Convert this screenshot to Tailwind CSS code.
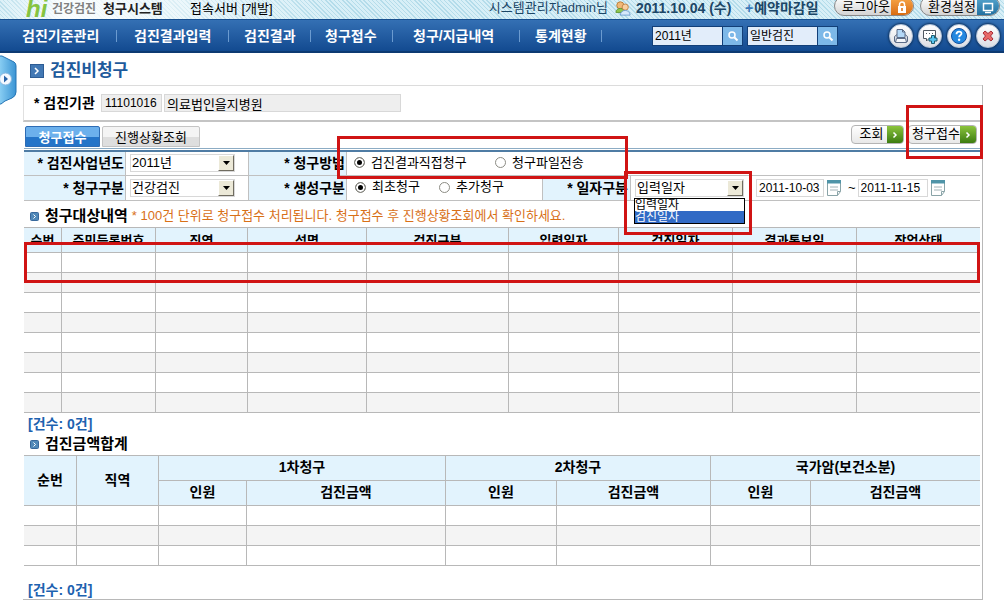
<!DOCTYPE html>
<html lang="ko">
<head>
<meta charset="utf-8">
<title>검진비청구</title>
<script src="https://cdn.jsdelivr.net/npm/@tailwindcss/browser@4"></script>
</head>
<body class="bg-white text-black text-[13px] leading-4 font-['Liberation_Sans','Noto_Sans_CJK_KR',sans-serif]">

<header class="flex h-[19px] items-end overflow-hidden whitespace-nowrap pr-1 bg-[repeating-linear-gradient(45deg,#b4dcea_0px,#b4dcea_1px,#d8eff7_1px,#d8eff7_3px)]">
  <div class="flex w-[330px] items-end self-stretch bg-linear-to-r from-white/10 via-white/90 via-20% to-white/0 pb-0.5 pl-[26px]">
    <span class="mr-1.5 w-5 text-[24px] leading-4 font-bold italic text-[#86c440]">hi</span>
    <span class="mr-[5px] w-[46px] text-[12px] font-bold text-[#808080]">건강검진</span>
    <span class="mr-6 w-[63px] text-[13px] font-bold text-[#222]">청구시스템</span>
    <span>접속서버 [개발]</span>
  </div>
  <div class="ml-auto flex items-end pb-[3px] text-[#1c4666]">
    <span class="mr-1.5">시스템관리자admin님</span>
    <svg class="mr-1 h-4 w-[18px]" viewBox="0 0 18 18"><circle cx="6" cy="6" r="4" fill="#f0b878" stroke="#b87830"/><path d="M1 14c0-6 10-6 10 0z" fill="#8fc850" stroke="#5c9430"/><circle cx="11.500" cy="8" r="3.500" fill="#f8cfa0" stroke="#c08040"/><path d="M6 17c0-7 11-7 11 0z" fill="#d6e8fa" stroke="#6b9cd0"/></svg>
    <span class="mr-3 w-[97px] text-[14px] font-bold">2011.10.04 (수)</span>
    <a href="#" class="mr-[13px] w-[76px] text-[14px] font-bold"><span class="mr-px text-[#3a78b8]">+</span>예약마감일</a>
    <button class="mr-1.5 flex h-5 w-20 overflow-hidden rounded-full border border-[#888] bg-linear-to-b from-white to-[#d4d4d4] text-black"><span class="flex-1 pl-1.5 pt-0.5">로그아웃</span><span class="flex h-full w-[22px] items-end justify-center bg-linear-to-b from-[#f8a848] to-[#d86c10]"><svg class="h-[14px] w-3" viewBox="0 0 12 14"><path d="M3.500 6V3.500a2.500 2.500 0 0 1 5 0V6" fill="none" stroke="#fff" stroke-width="1.500"/><rect x="2" y="5" width="8" height="7" fill="#fff"/><path d="M6 7v3" stroke="#d86c10" stroke-width="1.500"/></svg></span></button>
    <button class="flex h-5 w-20 overflow-hidden rounded-full border border-[#888] bg-linear-to-b from-white to-[#d4d4d4] text-black"><span class="flex-1 pl-1.5 pt-0.5">환경설정</span><span class="flex h-full w-[22px] items-end justify-center bg-linear-to-b from-[#58a8d0] to-[#2070a0]"><svg class="h-[14px] w-3" viewBox="0 0 12 14"><rect x="1.500" y="2.500" width="9" height="7" fill="none" stroke="#fff" stroke-width="1.500"/><path d="M3 11.500h6" stroke="#fff" stroke-width="1.500"/></svg></span></button>
  </div>
</header>

<nav class="flex h-[34px] items-center border-b-2 border-t border-b-[#0d3a72] border-t-[#174f8f] bg-linear-to-b from-[#3470b4] to-[#124a90] pl-[22px] pr-1 text-[14px] font-bold text-white whitespace-nowrap">
  <a href="#" class="w-[94px]">검진기준관리</a><i class="mr-[17px] h-3 w-px bg-[#6b9bd0]"></i>
  <a href="#" class="w-[94px]">검진결과입력</a><i class="mr-[15px] h-3 w-px bg-[#6b9bd0]"></i>
  <a href="#" class="w-[66px]">검진결과</a><i class="mr-[14px] h-3 w-px bg-[#6b9bd0]"></i>
  <a href="#" class="w-[67px]">청구접수</a><i class="mr-5 h-3 w-px bg-[#6b9bd0]"></i>
  <a href="#" class="w-[106px]">청구/지급내역</a><i class="mr-[15px] h-3 w-px bg-[#6b9bd0]"></i>
  <a href="#" class="w-[66px]">통계현황</a><i class="h-3 w-px bg-[#6b9bd0]"></i>
  <div class="ml-auto flex items-center">
    <div class="mr-1 flex h-5 w-[91px] border border-[#123f78] bg-[#e2edfa]">
      <input aria-label="년도" value="2011년" class="w-0 flex-1 px-0.5 text-[12px] font-normal leading-4 text-black">
      <button aria-label="년도 검색" class="flex w-5 items-center justify-center border-l border-[#123f78] bg-[#7db8e8]"><svg class="h-3 w-3" viewBox="0 0 12 12" fill="none" stroke="#fff"><circle cx="5" cy="5" r="3" stroke-width="1.500"/><path d="M7.500 7.500l3 3" stroke-width="2"/></svg></button>
    </div>
    <div class="mr-[51px] flex h-5 w-[91px] border border-[#123f78] bg-[#e2edfa]">
      <input aria-label="검진종류" value="일반검진" class="w-0 flex-1 px-0.5 text-[12px] font-normal leading-4 text-black">
      <button aria-label="검진종류 검색" class="flex w-5 items-center justify-center border-l border-[#123f78] bg-[#7db8e8]"><svg class="h-3 w-3" viewBox="0 0 12 12" fill="none" stroke="#fff"><circle cx="5" cy="5" r="3" stroke-width="1.500"/><path d="M7.500 7.500l3 3" stroke-width="2"/></svg></button>
    </div>
    <div class="flex gap-[5px]">
      <button aria-label="인쇄" class="flex h-6 w-6 items-center justify-center rounded-full border border-[#b8c4d4] bg-linear-to-b from-white to-[#dcdee4] shadow-[0_0_2px_1px_#123764]"><svg class="h-[18px] w-[18px]" viewBox="0 0 18 18" stroke="#5c6c88"><path d="M2.500 9.500l2.500-2h8l2.500 2v5h-13z" fill="#d8dce4"/><path d="M5 10.500v-8h5.500L13 5v5.500z" fill="#b4d8f8"/><path d="M10.500 2.500V5H13" fill="none"/><path d="M4.500 11.500h9l1 4h-11z" fill="#f4f6fa"/></svg></button>
      <button aria-label="메시지 추가" class="flex h-6 w-6 items-center justify-center rounded-full border border-[#b8c4d4] bg-linear-to-b from-white to-[#dcdee4] shadow-[0_0_2px_1px_#123764]"><svg class="h-[18px] w-[18px]" viewBox="0 0 18 18" fill="#fff" stroke="#505860"><path d="M2.500 3.500h12v8H8L5.500 14v-2.500h-3z"/><path d="M5 6.500h1M8 6.500h1M11 6.500h1"/><path d="M10.500 8.500h3v2.500h2.500v3h-2.500v2.500h-3V14H8v-3h2.500z" fill="#58c4f0" stroke="#1c5c70"/></svg></button>
      <button aria-label="도움말" class="flex h-6 w-6 items-center justify-center rounded-full border border-[#b8c4d4] bg-linear-to-b from-white to-[#dcdee4] shadow-[0_0_2px_1px_#123764]"><svg class="h-[18px] w-[18px]" viewBox="0 0 18 18"><circle cx="9" cy="9" r="7.500" fill="#2488e0" stroke="#1050a0"/><path d="M6.500 7.200c0-3.500 5-3.300 5-.6 0 1.700-2.400 1.700-2.400 3.600" fill="none" stroke="#fff" stroke-width="1.800"/><circle cx="9.100" cy="12.800" r="1.200" fill="#fff"/></svg></button>
      <button aria-label="닫기" class="flex h-6 w-6 items-center justify-center rounded-full border border-[#b8c4d4] bg-linear-to-b from-white to-[#dcdee4] shadow-[0_0_2px_1px_#123764]"><svg class="h-[14px] w-[14px]" viewBox="0 0 14 14"><path d="M2 4l2-2 3 2.500L10 2l2 2-2.500 3L12 10l-2 2-3-2.500L4 12l-2-2 2.500-3z" fill="#e86868" stroke="#a82c38"/></svg></button>
    </div>
  </div>
</nav>

<main class="relative ml-[23px] mr-[21px] whitespace-nowrap">
  <button aria-label="메뉴 열기" class="absolute -left-[23px] top-[2px]"><svg class="h-[50px] w-[17px]" viewBox="0 0 17 50"><defs><linearGradient id="tabfill"><stop offset="0" stop-color="#8cd0f4"/><stop offset="1" stop-color="#3a94d4"/></linearGradient></defs><path d="M-1 1h3l4 2 8 4q2 1 2 4v26q0 4-4 6l-7 3-4 3h-2z" fill="url(#tabfill)" stroke="#2474b4"/><circle cx="5.500" cy="24" r="6" fill="#f4f9ff" stroke="#88b8e0"/><path d="M4 20.500v7l4-3.500z" fill="#2a64a8"/></svg></button>

  <h1 class="flex h-8 items-center gap-1.5 pl-[7px] pt-1 text-[17px] leading-5 font-bold text-[#1d5a9c]">
    <svg class="h-[14px] w-[14px]" viewBox="0 0 14 14"><rect x=".5" y=".5" width="13" height="13" fill="#4278b4" stroke="#2d5c94"/><path d="M5 4l3 3-3 3" fill="none" stroke="#fff" stroke-width="1.500"/></svg>검진비청구
  </h1>

  <div class="border-r border-b border-[#b8b8b8]">
    <div class="flex h-[37px] items-center border-b-2 border-l border-t border-b-[#c4c4c4] border-l-[#e0e0e0] border-t-[#dcdcdc] pl-[10px]">
      <label for="org" class="w-[67px] text-[14px] font-bold">* 검진기관</label>
      <input id="org" readonly value="11101016" class="mr-0.5 h-[18px] w-[61px] border border-[#d8d8d8] bg-[#eee] px-[3px] text-[12px]">
      <input aria-label="기관명" readonly value="의료법인을지병원" class="h-[18px] w-[237px] border border-[#d8d8d8] bg-[#eee] px-0.5 text-[13px]">
    </div>

    <div class="pl-px pr-0.5">
      <div class="flex h-[26px] items-end gap-0.5 pl-px">
        <button class="mb-px h-[21px] w-[75px] rounded-t-xs border border-[#2e6cb4] bg-linear-to-b from-[#6cb0ec] from-50% to-[#2474c8] to-50% pt-0.5 text-[13px] font-bold text-white">청구접수</button>
        <button class="mb-px h-[21px] w-[98px] rounded-t-xs border border-[#c4c4c4] bg-linear-to-b from-[#f4f4f4] from-50% to-[#dedede] to-50% pt-0.5 text-[13px]">진행상황조회</button>
        <div class="ml-auto flex gap-1 pb-1 pr-[3px]">
          <button class="flex h-[19px] w-[53px] items-stretch overflow-hidden rounded-sm border border-[#b4b4b4] bg-linear-to-b from-white to-[#e8e8e8]"><span class="flex-1 pl-1">조회</span><span class="flex w-4 items-center justify-center bg-linear-to-b from-[#8cc43c] to-[#3c7c10]"><svg class="h-2 w-2" viewBox="0 0 8 8"><path d="M2.500 1.500L5 4 2.500 6.500" fill="none" stroke="#fff" stroke-width="1.500"/></svg></span></button>
          <div class="relative">
            <button class="flex h-[19px] w-[69px] items-stretch overflow-hidden rounded-sm border border-[#b4b4b4] bg-linear-to-b from-white to-[#e8e8e8]"><span class="flex-1 pl-[3px] text-left">청구접수</span><span class="flex w-4 items-center justify-center bg-linear-to-b from-[#8cc43c] to-[#3c7c10]"><svg class="h-2 w-2" viewBox="0 0 8 8"><path d="M2.500 1.500L5 4 2.500 6.500" fill="none" stroke="#fff" stroke-width="1.500"/></svg></span></button>
            <div class="pointer-events-none absolute -left-0.5 -right-1.5 -top-5 h-[54px] border-3 border-[#d01414]"></div>
          </div>
        </div>
      </div>
      <div class="h-1 border-b-2 border-t border-b-[#4f7ca4] border-t-[#8cacc4]"></div>

      <form>
        <div class="flex h-6 border-b border-[#c0c0c0]">
          <label for="year" class="flex w-[102px] items-center justify-end border-r border-[#c0c0c0] bg-[#e2f3fd] pb-0.5 pr-px text-[14px] font-bold">* 검진사업년도</label>
          <div class="flex w-[123px] items-center border-r border-[#c0c0c0] pb-0.5 pl-1">
            <div class="relative h-[18px] w-[105px] border border-[#d8d8d8]">
              <select id="year" class="h-4 w-full appearance-none pl-px text-[13px] leading-4"><option>2011년</option></select>
              <span class="pointer-events-none absolute right-0 top-0 flex h-4 w-4 items-center justify-center border border-b-[#706c60] border-l-white border-r-[#706c60] border-t-white bg-[#ece9d8]"><svg class="h-1 w-[7px]" viewBox="0 0 7 4"><path d="M0 0h7L3.500 4z"/></svg></span>
            </div>
          </div>
          <span class="flex w-[98px] items-center justify-end border-r border-[#c0c0c0] bg-[#e2f3fd] pb-0.5 pr-px text-[14px] font-bold">* 청구방법</span>
          <div class="relative flex items-center pb-0.5 pl-[7px]">
            <input type="radio" name="method" id="m1" checked class="mr-1.5 h-[11px] w-[11px] appearance-none rounded-full border border-[#8c8c84] bg-white shadow-[inset_0_0_0_2px_#fff] checked:bg-black"><label for="m1" class="w-[124px]">검진결과직접청구</label>
            <input type="radio" name="method" id="m2" class="mr-1.5 h-[11px] w-[11px] appearance-none rounded-full border border-[#8c8c84] bg-white shadow-[inset_0_0_0_2px_#fff] checked:bg-black"><label for="m2" class="w-[116px]">청구파일전송</label>
            <div class="pointer-events-none absolute -left-[10px] right-0 -top-4 z-10 h-[43px] border-3 border-[#d01414]"></div>
          </div>
        </div>
        <div class="flex h-[25px] border-b border-[#c0c0c0]">
          <label for="kind" class="flex w-[102px] items-center justify-end border-r border-[#c0c0c0] bg-[#e2f3fd] pr-px text-[14px] font-bold">* 청구구분</label>
          <div class="flex w-[123px] items-center border-r border-[#c0c0c0] pl-1">
            <div class="relative h-[18px] w-[105px] border border-[#d8d8d8]">
              <select id="kind" class="h-4 w-full appearance-none pl-px text-[13px] leading-4"><option>건강검진</option></select>
              <span class="pointer-events-none absolute right-0 top-0 flex h-4 w-4 items-center justify-center border border-b-[#706c60] border-l-white border-r-[#706c60] border-t-white bg-[#ece9d8]"><svg class="h-1 w-[7px]" viewBox="0 0 7 4"><path d="M0 0h7L3.500 4z"/></svg></span>
            </div>
          </div>
          <span class="flex w-[98px] items-center justify-end border-r border-[#c0c0c0] bg-[#e2f3fd] pr-px text-[14px] font-bold">* 생성구분</span>
          <div class="flex w-[196px] items-center border-r border-[#c0c0c0] pb-0.5 pl-2">
            <input type="radio" name="create" id="c1" checked class="mr-1.5 h-[11px] w-[11px] appearance-none rounded-full border border-[#8c8c84] bg-white shadow-[inset_0_0_0_2px_#fff] checked:bg-black"><label for="c1" class="w-[67px]">최초청구</label>
            <input type="radio" name="create" id="c2" class="mr-1.5 h-[11px] w-[11px] appearance-none rounded-full border border-[#8c8c84] bg-white shadow-[inset_0_0_0_2px_#fff] checked:bg-black"><label for="c2">추가청구</label>
          </div>
          <label for="datekind" class="flex w-[88px] items-center justify-end border-r border-[#c0c0c0] bg-[#e2f3fd] pr-0.5 text-[14px] font-bold">* 일자구분</label>
          <div class="flex items-center pl-1">
            <div class="relative mr-3 h-[18px] w-[109px] border border-[#d8d8d8]">
              <select id="datekind" class="h-4 w-full appearance-none pl-px text-[13px] leading-4"><option>입력일자</option><option>검진일자</option></select>
              <span class="pointer-events-none absolute right-0 top-0 flex h-4 w-4 items-center justify-center border border-b-[#706c60] border-l-white border-r-[#706c60] border-t-white bg-[#ece9d8]"><svg class="h-1 w-[7px]" viewBox="0 0 7 4"><path d="M0 0h7L3.500 4z"/></svg></span>
              <ul class="absolute -left-0.5 top-[18px] z-10 w-[111px] border border-black bg-white text-[12px] leading-3"><li>입력일자</li><li class="bg-[#316ac5] text-white">검진일자</li></ul>
              <div class="pointer-events-none absolute -left-[12px] -top-[9px] z-20 h-[64px] w-[128px] border-3 border-[#d01414]"></div>
            </div>
            <input aria-label="시작일" value="2011-10-03" class="mr-[3px] h-[18px] w-[68px] border border-[#d8d8d8] pl-0.5 text-[12px]">
            <button type="button" aria-label="시작일 달력" class="mr-[7px]"><svg class="block h-4 w-[14px]" viewBox="0 0 14 16"><path d="M.5 1.500h13v10l-3 4H.5z" fill="#fff" stroke="#8aa4a8"/><path d="M0 0h14v3.500H0z" fill="#4f94a8"/><path d="M3 7h8M3 10h8" stroke="#a4b4b8"/><path d="M13.500 11.500h-3v4" fill="none" stroke="#8aa4a8"/></svg></button>
            <span class="mr-0.5">~</span>
            <input aria-label="종료일" value="2011-11-15" class="mr-[3px] h-[18px] w-[70px] border border-[#d8d8d8] pl-0.5 text-[12px]">
            <button type="button" aria-label="종료일 달력"><svg class="block h-4 w-[14px]" viewBox="0 0 14 16"><path d="M.5 1.500h13v10l-3 4H.5z" fill="#fff" stroke="#8aa4a8"/><path d="M0 0h14v3.500H0z" fill="#4f94a8"/><path d="M3 7h8M3 10h8" stroke="#a4b4b8"/><path d="M13.500 11.500h-3v4" fill="none" stroke="#8aa4a8"/></svg></button>
          </div>
        </div>
      </form>

      <div class="flex h-[26px] items-center pl-1.5 pt-1">
        <svg class="mr-1.5 h-[9px] w-[9px]" viewBox="0 0 9 9"><rect x=".5" y=".5" width="8" height="8" rx="1" fill="#5088b8" stroke="#38689c"/><path d="M3.500 2.500l2 2-2 2" fill="none" stroke="#fff"/></svg>
        <h2 class="mr-1 text-[15px] font-bold">청구대상내역</h2>
        <p class="text-[13px] text-[#d87018]">* 100건 단위로 청구접수 처리됩니다. 청구접수 후 진행상황조회에서 확인하세요.</p>
      </div>

      <div class="relative">
        <table class="w-full table-fixed border-separate border-spacing-0 border-t border-[#b8b8b8] text-[13px] [&_td]:h-5 [&_td]:border-b [&_td]:border-r [&_td]:border-[#b8b8b8] [&_td:last-child]:border-r-0 [&_th]:h-[25px] [&_th]:border-b [&_th]:border-r [&_th]:border-[#b8b8b8] [&_th]:bg-[#e2f3fd] [&_th]:p-0 [&_th]:pb-0.5 [&_th:last-child]:border-r-0 [&_tbody_tr:nth-child(even)]:bg-[#f4f4f4]">
          <colgroup><col class="w-[38px]"><col class="w-[94px]"><col class="w-[92px]"><col class="w-[119px]"><col class="w-[142px]"><col class="w-[110px]"><col class="w-[114px]"><col class="w-[124px]"><col></colgroup>
          <thead><tr>
            <th><div class="h-[11px] overflow-hidden leading-[13px]">순번</div></th><th><div class="h-[11px] overflow-hidden leading-[13px]">주민등록번호</div></th><th><div class="h-[11px] overflow-hidden leading-[13px]">직역</div></th><th><div class="h-[11px] overflow-hidden leading-[13px]">성명</div></th><th><div class="h-[11px] overflow-hidden leading-[13px]">검진구분</div></th><th><div class="h-[11px] overflow-hidden leading-[13px]">입력일자</div></th><th><div class="h-[11px] overflow-hidden leading-[13px]">검진일자</div></th><th><div class="h-[11px] overflow-hidden leading-[13px]">결과통보일</div></th><th><div class="h-[11px] overflow-hidden leading-[13px]">작업상태</div></th>
          </tr></thead>
          <tbody>
            <tr><td></td><td></td><td></td><td></td><td></td><td></td><td></td><td></td><td></td></tr>
            <tr><td></td><td></td><td></td><td></td><td></td><td></td><td></td><td></td><td></td></tr>
            <tr><td></td><td></td><td></td><td></td><td></td><td></td><td></td><td></td><td></td></tr>
            <tr><td></td><td></td><td></td><td></td><td></td><td></td><td></td><td></td><td></td></tr>
            <tr><td></td><td></td><td></td><td></td><td></td><td></td><td></td><td></td><td></td></tr>
            <tr><td></td><td></td><td></td><td></td><td></td><td></td><td></td><td></td><td></td></tr>
            <tr><td></td><td></td><td></td><td></td><td></td><td></td><td></td><td></td><td></td></tr>
            <tr><td></td><td></td><td></td><td></td><td></td><td></td><td></td><td></td><td></td></tr>
          </tbody>
        </table>
        <div class="pointer-events-none absolute inset-x-0 top-[15px] h-[41px] border-3 border-[#d01414]"></div>
      </div>

      <p class="h-5 pl-1 pt-[3px] text-[14px] font-bold text-[#1d62b0]">[건수: 0건]</p>

      <div class="flex h-[22px] items-center pl-1.5">
        <svg class="mr-1.5 h-[9px] w-[9px]" viewBox="0 0 9 9"><rect x=".5" y=".5" width="8" height="8" rx="1" fill="#5088b8" stroke="#38689c"/><path d="M3.500 2.500l2 2-2 2" fill="none" stroke="#fff"/></svg>
        <h2 class="text-[15px] font-bold">검진금액합계</h2>
      </div>

      <table class="w-full table-fixed border-separate border-spacing-0 border-t border-[#b8b8b8] text-[14px] leading-4 [&_td]:h-5 [&_td]:border-b [&_td]:border-r [&_td]:border-[#b8b8b8] [&_td:last-child]:border-r-0 [&_th]:h-[25px] [&_th]:border-b [&_th]:border-r [&_th]:border-[#b8b8b8] [&_th]:bg-[#e2f3fd] [&_th]:p-0 [&_th]:pb-0.5 [&_th:last-child]:border-r-0 [&_tbody_tr:nth-child(even)]:bg-[#f4f4f4]">
        <colgroup><col class="w-[53px]"><col class="w-[82px]"><col class="w-[88px]"><col class="w-[199px]"><col class="w-[111px]"><col class="w-[154px]"><col class="w-[100px]"><col></colgroup>
        <thead>
          <tr><th rowspan="2">순번</th><th rowspan="2">직역</th><th colspan="2">1차청구</th><th colspan="2">2차청구</th><th colspan="2">국가암(보건소분)</th></tr>
          <tr><th>인원</th><th>검진금액</th><th>인원</th><th>검진금액</th><th>인원</th><th>검진금액</th></tr>
        </thead>
        <tbody>
          <tr><td></td><td></td><td></td><td></td><td></td><td></td><td></td><td></td></tr>
          <tr><td></td><td></td><td></td><td></td><td></td><td></td><td></td><td></td></tr>
          <tr><td></td><td></td><td></td><td></td><td></td><td></td><td></td><td></td></tr>
        </tbody>
      </table>

      <p class="flex h-[33px] items-end pb-px pl-1 text-[14px] font-bold text-[#1d62b0]">[건수: 0건]</p>
    </div>
  </div>
</main>
</body>
</html>
